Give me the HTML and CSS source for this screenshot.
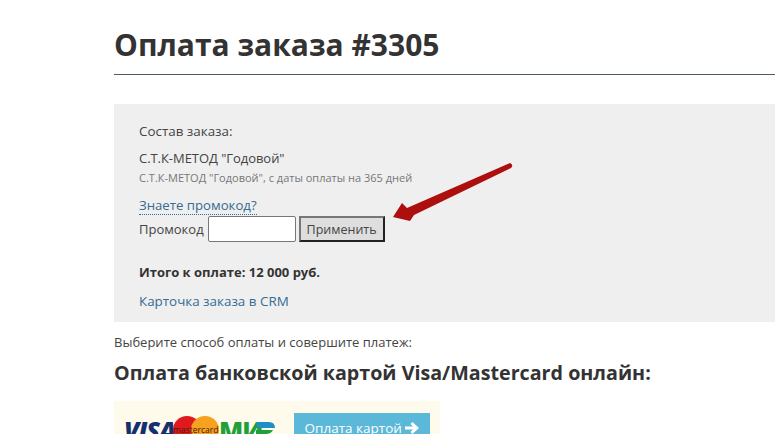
FILE: index.html
```html
<!DOCTYPE html>
<html lang="ru">
<head>
    <meta charset="UTF-8">
    <meta name="viewport" content="width=device-width, initial-scale=1.0">
    <title>Оплата заказа #3305</title>
    <link rel="stylesheet" href="styles.css">
</head>
<body>
    <div class="container">
        <h1>Оплата заказа #3305</h1>

        <div class="order">
            <p class="order-title">Состав заказа:</p>
            <p class="item-name">С.Т.К-МЕТОД "Годовой"</p>
            <p class="item-note">С.Т.К-МЕТОД "Годовой", с даты оплаты на 365 дней</p>
            <a class="promo-link" href="#">Знаете промокод?</a>
            <form class="promo-form">
                <label for="promo">Промокод</label>
                <input id="promo" type="text">
                <button type="button">Применить</button>
            </form>
            <p class="total">Итого к оплате: 12 000 руб.</p>
            <a class="crm-link" href="#">Карточка заказа в CRM</a>

            <svg class="arrow" width="124" height="66" viewBox="0 0 124 66">
                <path d="M1 55 L10 41 L15 46 L118 1 Q122 3 119 6 L22 53 L18 59 Z" fill="#ad0e0e"/>
            </svg>
        </div>

        <p class="hint">Выберите способ оплаты и совершите платеж:</p>
        <h2>Оплата банковской картой Visa/Mastercard онлайн:</h2>

        <div class="pay">
            <div class="logos">
                <span class="visa">VISA</span>
                <span class="mc">
                    <span class="mc-red"></span>
                    <span class="mc-orange"></span>
                    <span class="mc-text">mastercard</span>
                </span>
                <span class="mir">МИ</span>
                <svg class="mir-tail" width="19" height="16" viewBox="0 0 19 16">
                    <path d="M0 0 H13 Q19 0 19 6 H4 Q1 6 0 0 Z" fill="#1e8fc4"/>
                    <path d="M0 8 H17 Q15 12 10 12 H4 V16 H0 Z" fill="#1fa038"/>
                </svg>
            </div>
            <a class="pay-btn" href="#">Оплата картой
                <svg class="pay-arrow" width="14" height="12" viewBox="0 0 14 12">
                    <path d="M0 4.5 H8 L5.5 2 L7.5 0 L14 6 L7.5 12 L5.5 10 L8 7.5 H0 Z" fill="#fff"/>
                </svg>
            </a>
        </div>
    </div>
</body>
</html>
```

FILE: styles.css
```css
html, body {
    margin: 0;
    height: 434px;
    overflow: hidden;
}
body {
    font-family: "Open Sans", Arial, sans-serif;
    font-size: 13px;
    color: #444;
    background-color: #fff;
}
p { margin: 0; }
a { color: #336c94; text-decoration: none; }

.container {
    margin-left: 114px;
    padding-top: 25px;
}
h1 {
    margin: 0 0 29px;
    height: 49px;
    border-bottom: 1px solid #4c5a66;
    font-size: 30px;
    line-height: 40px;
    font-weight: 700;
    color: #333;
}
h2 {
    margin: 8px 0 14px;
    font-size: 19.7px;
    line-height: 28px;
    font-weight: 700;
    color: #333;
}

.order {
    position: relative;
    height: 218px;
    padding: 18px 25px 0;
    box-sizing: border-box;
    background-color: #efefef;
}
.order-title { font-size: 13.4px; line-height: 18px; }
.item-name { margin-top: 9px; font-size: 13px; line-height: 18px; letter-spacing: -0.05px; }
.item-note { margin-top: 3px; font-size: 11px; line-height: 16px; color: #777; }
.promo-link {
    display: inline-block;
    margin: 11px 0 1px;
    font-size: 13.2px;
    line-height: 17px;
    border-bottom: 1px dotted #336c94;
}
.promo-form {
    display: flex;
    align-items: center;
    gap: 3px;
    font-size: 13px;
}
.promo-form label { margin-right: 1px; }
.promo-form input {
    width: 88px;
    height: 26px;
    padding: 0;
    box-sizing: border-box;
    border: 1px solid #777;
    border-radius: 2px;
    background: #fff;
}
.promo-form button {
    width: 86px;
    height: 26px;
    padding: 0;
    border: 2px solid;
    border-color: #777 #222 #222 #777;
    background-color: #dedede;
    font: 12.5px "Open Sans", Arial, sans-serif;
    color: #444;
}
.total { margin-top: 21px; font-size: 13px; line-height: 18px; font-weight: 700; color: #333; }
.crm-link { display: block; margin-top: 11px; font-size: 13.4px; line-height: 18px; }
.arrow { position: absolute; left: 278px; top: 58px; }

.hint { margin-top: 11px; font-size: 13px; line-height: 18px; }

.pay {
    display: flex;
    align-items: flex-start;
    width: 326px;
    height: 60px;
    background-color: #fefaec;
}
.logos {
    display: flex;
    align-items: flex-start;
    width: 180px;
    height: 40px;
    padding: 15px 0 0 10px;
    box-sizing: border-box;
}
.visa {
    width: 48px;
    font-size: 25px;
    line-height: 28px;
    font-weight: 800;
    font-style: italic;
    color: #15306e;
    letter-spacing: -1px;
}
.mc {
    position: relative;
    display: block;
    width: 46px;
    height: 30px;
}
.mc-red, .mc-orange {
    position: absolute;
    top: 0;
    width: 28px;
    height: 28px;
    border-radius: 50%;
}
.mc-red { left: 1px; background-color: #e0191d; }
.mc-orange { left: 19px; background-color: #f6a11f; }
.mc-text {
    position: absolute;
    left: 1px;
    top: 8px;
    font-size: 8.5px;
    line-height: 12px;
    color: #4a1a10;
}
.mir {
    width: 37px;
    margin-left: 1px;
    font-size: 25px;
    line-height: 28px;
    font-weight: 800;
    color: #1fa038;
    letter-spacing: -1px;
}
.mir-tail { margin-top: 6px; }

.pay-btn {
    display: block;
    width: 136px;
    height: 40px;
    margin-top: 12px;
    box-sizing: border-box;
    padding-top: 6px;
    text-align: center;
    background-color: #5bb8d8;
    color: #fff;
    font-size: 13.5px;
    line-height: 18px;
}
.pay-arrow { vertical-align: -1px; }
```
